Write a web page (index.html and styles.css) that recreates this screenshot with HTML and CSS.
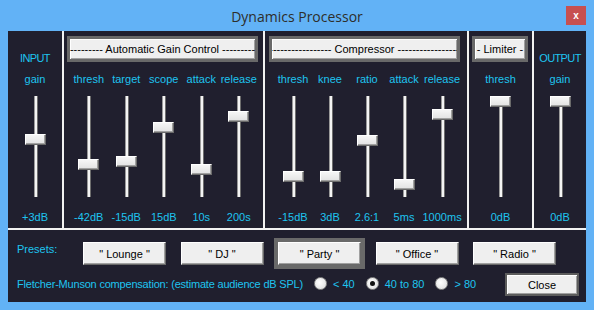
FILE: index.html
```html
<!DOCTYPE html>
<html lang="en">

<head>
    <meta charset="UTF-8">
    <meta name="viewport" content="width=device-width, initial-scale=1.0">
    <title>Dynamics Processor</title>
    <link rel="stylesheet" href="styles.css">
</head>

<body>
    <div class="window">
        <div class="titlebar">
            <span class="title">Dynamics Processor</span>
            <span class="close-x">x</span>
        </div>

        <div class="content">
            <div class="panels">
                <!-- input -->
                <section class="panel panel-input">
                    <div class="panel-head"><span class="caption">INPUT</span></div>
                    <div class="sliders">
                        <div class="slider-col">
                            <div class="slider-label">gain</div>
                            <div class="slider"><div class="track"></div><div class="thumb" style="top: 38px"></div></div>
                            <div class="slider-value">+3dB</div>
                        </div>
                    </div>
                </section>
                <div class="vsep"></div>

                <!-- automatic gain control -->
                <section class="panel panel-agc">
                    <div class="panel-head"><div class="head-btn">--------- Automatic Gain Control ---------</div></div>
                    <div class="sliders">
                        <div class="slider-col">
                            <div class="slider-label">thresh</div>
                            <div class="slider"><div class="track"></div><div class="thumb" style="top: 63px"></div></div>
                            <div class="slider-value">-42dB</div>
                        </div>
                        <div class="slider-col">
                            <div class="slider-label">target</div>
                            <div class="slider"><div class="track"></div><div class="thumb" style="top: 60px"></div></div>
                            <div class="slider-value">-15dB</div>
                        </div>
                        <div class="slider-col">
                            <div class="slider-label">scope</div>
                            <div class="slider"><div class="track"></div><div class="thumb" style="top: 26px"></div></div>
                            <div class="slider-value">15dB</div>
                        </div>
                        <div class="slider-col">
                            <div class="slider-label">attack</div>
                            <div class="slider"><div class="track"></div><div class="thumb" style="top: 68px"></div></div>
                            <div class="slider-value">10s</div>
                        </div>
                        <div class="slider-col">
                            <div class="slider-label">release</div>
                            <div class="slider"><div class="track"></div><div class="thumb" style="top: 15px"></div></div>
                            <div class="slider-value">200s</div>
                        </div>
                    </div>
                </section>
                <div class="vsep"></div>

                <!-- compressor -->
                <section class="panel panel-comp">
                    <div class="panel-head"><div class="head-btn">----------------- Compressor -----------------</div></div>
                    <div class="sliders">
                        <div class="slider-col">
                            <div class="slider-label">thresh</div>
                            <div class="slider"><div class="track"></div><div class="thumb" style="top: 75px"></div></div>
                            <div class="slider-value">-15dB</div>
                        </div>
                        <div class="slider-col">
                            <div class="slider-label">knee</div>
                            <div class="slider"><div class="track"></div><div class="thumb" style="top: 75px"></div></div>
                            <div class="slider-value">3dB</div>
                        </div>
                        <div class="slider-col">
                            <div class="slider-label">ratio</div>
                            <div class="slider"><div class="track"></div><div class="thumb" style="top: 39px"></div></div>
                            <div class="slider-value">2.6:1</div>
                        </div>
                        <div class="slider-col">
                            <div class="slider-label">attack</div>
                            <div class="slider"><div class="track"></div><div class="thumb" style="top: 83px"></div></div>
                            <div class="slider-value">5ms</div>
                        </div>
                        <div class="slider-col">
                            <div class="slider-label">release</div>
                            <div class="slider"><div class="track"></div><div class="thumb" style="top: 13px"></div></div>
                            <div class="slider-value">1000ms</div>
                        </div>
                    </div>
                </section>
                <div class="vsep"></div>

                <!-- limiter -->
                <section class="panel panel-limit">
                    <div class="panel-head"><div class="head-btn">- Limiter -</div></div>
                    <div class="sliders">
                        <div class="slider-col">
                            <div class="slider-label">thresh</div>
                            <div class="slider"><div class="track"></div><div class="thumb" style="top: 0px"></div></div>
                            <div class="slider-value">0dB</div>
                        </div>
                    </div>
                </section>
                <div class="vsep"></div>

                <!-- output -->
                <section class="panel panel-output">
                    <div class="panel-head"><span class="caption">OUTPUT</span></div>
                    <div class="sliders">
                        <div class="slider-col">
                            <div class="slider-label">gain</div>
                            <div class="slider"><div class="track"></div><div class="thumb" style="top: 0px"></div></div>
                            <div class="slider-value">0dB</div>
                        </div>
                    </div>
                </section>
            </div>

            <div class="hsep"></div>

            <div class="bottom">
                <div class="presets-row">
                    <span class="presets-label">Presets:</span>
                    <div class="preset-btn">" Lounge "</div>
                    <div class="preset-btn">" DJ "</div>
                    <div class="preset-btn active">" Party "</div>
                    <div class="preset-btn">" Office "</div>
                    <div class="preset-btn">" Radio "</div>
                </div>
                <div class="fm-row">
                    <span class="fm-label">Fletcher-Munson compensation: (estimate audience dB SPL)</span>
                    <label class="radio-opt"><span class="radio"></span>&lt; 40</label>
                    <label class="radio-opt"><span class="radio checked"></span>40 to 80</label>
                    <label class="radio-opt"><span class="radio"></span>&gt; 80</label>
                    <div class="close-btn">Close</div>
                </div>
            </div>
        </div>
    </div>
</body>

</html>
```

FILE: styles.css
```css
* {
    box-sizing: border-box;
}

body {
    margin: 0;
    background-color: #62b2f6;
    font-family: "Liberation Sans", Arial, sans-serif;
    font-size: 11px;
}

.window {
    width: 594px;
    height: 310px;
    display: flex;
    flex-direction: column;
}

.titlebar {
    height: 31px;
    display: grid;
    grid-template-columns: 1fr auto 1fr;
    align-items: center;
}

.title {
    grid-column: 2;
    font-family: "Open Sans", "Noto Sans", sans-serif;
    font-size: 14px;
    color: #2e2e2a;
    padding-top: 1px;
}

.close-x {
    grid-column: 3;
    justify-self: end;
    margin-right: 8px;
    width: 20px;
    height: 19px;
    background-color: #c75050;
    color: #fff;
    font-weight: bold;
    font-size: 10px;
    display: flex;
    align-items: center;
    justify-content: center;
}

.content {
    flex: 1;
    margin: 0 8px 8px;
    background-color: #201f2e;
    display: flex;
    flex-direction: column;
}

.panels {
    height: 197px;
    display: flex;
}

.vsep {
    width: 2px;
    background-color: #f2f2f2;
}

.hsep {
    height: 2px;
    background-color: #f2f2f2;
}

.panel {
    display: flex;
    flex-direction: column;
}

.panel-input {
    width: 54px;
}

.panel-agc {
    width: 199px;
}

.panel-comp {
    width: 202px;
}

.panel-limit {
    width: 63px;
}

.panel-output {
    width: 52px;
}

.panel-head {
    height: 39px;
    display: flex;
    justify-content: center;
}

.caption {
    margin-top: 20px;
    line-height: 14px;
    color: #1ec4f0;
    letter-spacing: -0.6px;
}

.head-btn {
    margin-top: 5px;
    height: 26px;
    border: 3px solid #696969;
    background-color: #efefef;
    box-shadow: inset 1px 1px #fff, inset -1px -1px #a0a0a0;
    display: flex;
    justify-content: center;
    align-items: center;
    overflow: hidden;
    white-space: nowrap;
    color: #000;
}

.panel-agc .panel-head {
    justify-content: flex-start;
    padding-left: 3px;
}

.panel-comp .panel-head {
    justify-content: flex-start;
    padding-left: 4px;
}

.panel-limit .panel-head {
    justify-content: flex-start;
    padding-left: 3px;
}

.panel-agc .head-btn,
.panel-comp .head-btn {
    width: 191px;
}

.panel-limit .head-btn {
    width: 56px;
}

.sliders {
    display: flex;
}

.panel-agc .sliders {
    padding-left: 6px;
}

.panel-comp .sliders {
    padding-left: 9.5px;
}

.slider-col {
    flex: 1;
    display: flex;
    flex-direction: column;
    align-items: center;
    color: #1ec4f0;
}

.panel-agc .slider-col {
    flex: 0 0 37.5px;
}

.panel-comp .slider-col {
    flex: 0 0 37px;
}

.slider-label {
    height: 18px;
    line-height: 18px;
    white-space: nowrap;
}

.slider {
    position: relative;
    width: 21px;
    height: 101px;
    margin-top: 8px;
}

.track {
    position: absolute;
    left: 9px;
    top: 0;
    bottom: 0;
    width: 4px;
    background-color: #f4f4f4;
    box-shadow: inset 1px 0 #9a9a9a, inset -1px 0 #6e6e6e;
}

.thumb {
    position: absolute;
    left: 0;
    width: 21px;
    height: 11px;
    background: linear-gradient(#f6f6f6, #e2e2e2);
    border: 1px solid;
    border-color: #fff #6a6a6a #6a6a6a #fff;
    box-shadow: inset -1px -1px #a0a0a0;
}

.slider-value {
    margin-top: 13px;
    line-height: 14px;
    white-space: nowrap;
}

.bottom {
    flex: 1;
    padding: 12px 7px 0 9px;
    color: #1ec4f0;
}

.presets-row {
    display: flex;
    align-items: flex-start;
}

.presets-label {
    width: 66px;
    line-height: 14px;
}

.preset-btn {
    width: 83px;
    height: 23px;
    margin-right: 14.5px;
    background-color: #efefef;
    border: 1px solid;
    border-color: #fff #696969 #696969 #fff;
    box-shadow: inset -1px -1px #a0a0a0;
    color: #000;
    display: flex;
    align-items: center;
    justify-content: center;
    white-space: pre;
}

.preset-btn.active {
    outline: 4px solid #696969;
}

.fm-row {
    margin-top: 8px;
    display: flex;
    align-items: center;
}

.fm-label {
    width: 297px;
    white-space: nowrap;
    letter-spacing: -0.2px;
    padding-bottom: 2px;
}

.radio-opt {
    display: flex;
    align-items: center;
    gap: 6px;
    margin-right: 11px;
    padding-bottom: 2px;
}

.radio {
    width: 13px;
    height: 13px;
    border-radius: 50%;
    border: 1px solid #8c8c8c;
    background: radial-gradient(circle at 40% 40%, #ffffff, #dadada);
    display: flex;
    align-items: center;
    justify-content: center;
}

.radio.checked::after {
    content: "";
    width: 5px;
    height: 5px;
    border-radius: 50%;
    background-color: #111;
}

.close-btn {
    margin-left: auto;
    width: 74px;
    height: 23px;
    border: 2px solid #5c5c5c;
    background-color: #efefef;
    box-shadow: inset 1px 1px #fff, inset -1px -1px #a0a0a0;
    color: #000;
    display: flex;
    align-items: center;
    justify-content: center;
}
```
